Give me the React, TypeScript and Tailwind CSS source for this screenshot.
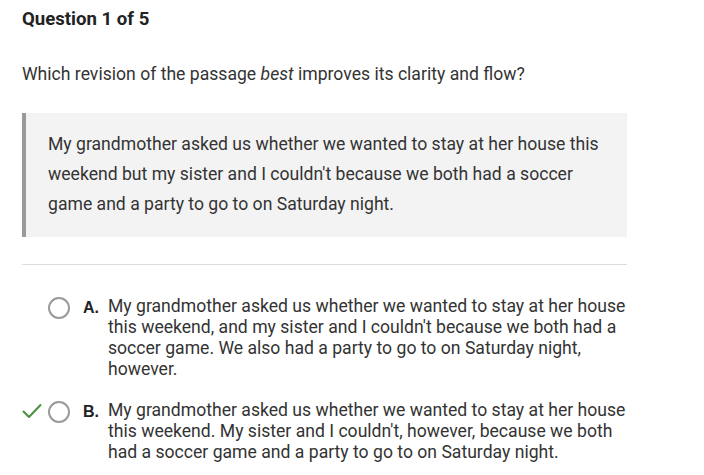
import React from "react";

function Radio() {
  return <div className="w-[22px] h-[22px] rounded-full border-2 border-[#9a9a9a] bg-white shrink-0" />;
}

export default function App() {
  return (
    <div className="w-[704px] h-[475px] bg-white overflow-hidden text-[#333] font-['Roboto',sans-serif]">
      <div className="pl-[22px] pt-[7px] w-[627px]">
        <div className="text-[18.6px] font-bold text-[#222] leading-[24px]">Question 1 of 5</div>
        <div className="mt-[31px] text-[17.6px] leading-[24px]">
          Which revision of the passage <i>best</i> improves its clarity and flow?
        </div>
        <div className="mt-[27px] bg-[#f3f3f3] border-l-4 border-[#999] pl-[22px] pr-[24px] pt-[16px] pb-[18px] text-[17.6px] leading-[30px]">
          My grandmother asked us whether we wanted to stay at her house this weekend but my sister and I couldn't because we both had a soccer game and a party to go to on Saturday night.
        </div>
        <div className="mt-[27px] border-t border-[#dddddd]" />
        <div className="mt-[31px] flex flex-col gap-[20px]">
          <div className="flex items-start">
            <div className="w-[26px] shrink-0" />
            <div className="pt-[1px]"><Radio /></div>
            <div className="w-[13px] shrink-0" />
            <div className="w-[25px] shrink-0 font-['Liberation_Sans',sans-serif] font-bold text-[16px] leading-[21px] pt-[1px] text-[#222]">A.</div>
            <div className="text-[17.6px] leading-[21px]">
              My grandmother asked us whether we wanted to stay at her house this weekend, and my sister and I couldn't because we both had a soccer game. We also had a party to go to on Saturday night, however.
            </div>
          </div>
          <div className="flex items-start">
            <div className="w-[26px] shrink-0 pt-[3px]">
              <svg width="20" height="16" viewBox="0 0 20 16" fill="none">
                <path d="M1.5 8.5 L7 14 L18.5 2" stroke="#4a8f3f" strokeWidth="2" strokeLinecap="round" strokeLinejoin="round" />
              </svg>
            </div>
            <div className="pt-[1px]"><Radio /></div>
            <div className="w-[13px] shrink-0" />
            <div className="w-[25px] shrink-0 font-['Liberation_Sans',sans-serif] font-bold text-[16px] leading-[21px] pt-[1px] text-[#222]">B.</div>
            <div className="text-[17.6px] leading-[21px]">
              My grandmother asked us whether we wanted to stay at her house this weekend. My sister and I couldn't, however, because we both had a soccer game and a party to go to on Saturday night.
            </div>
          </div>
        </div>
      </div>
    </div>
  );
}
